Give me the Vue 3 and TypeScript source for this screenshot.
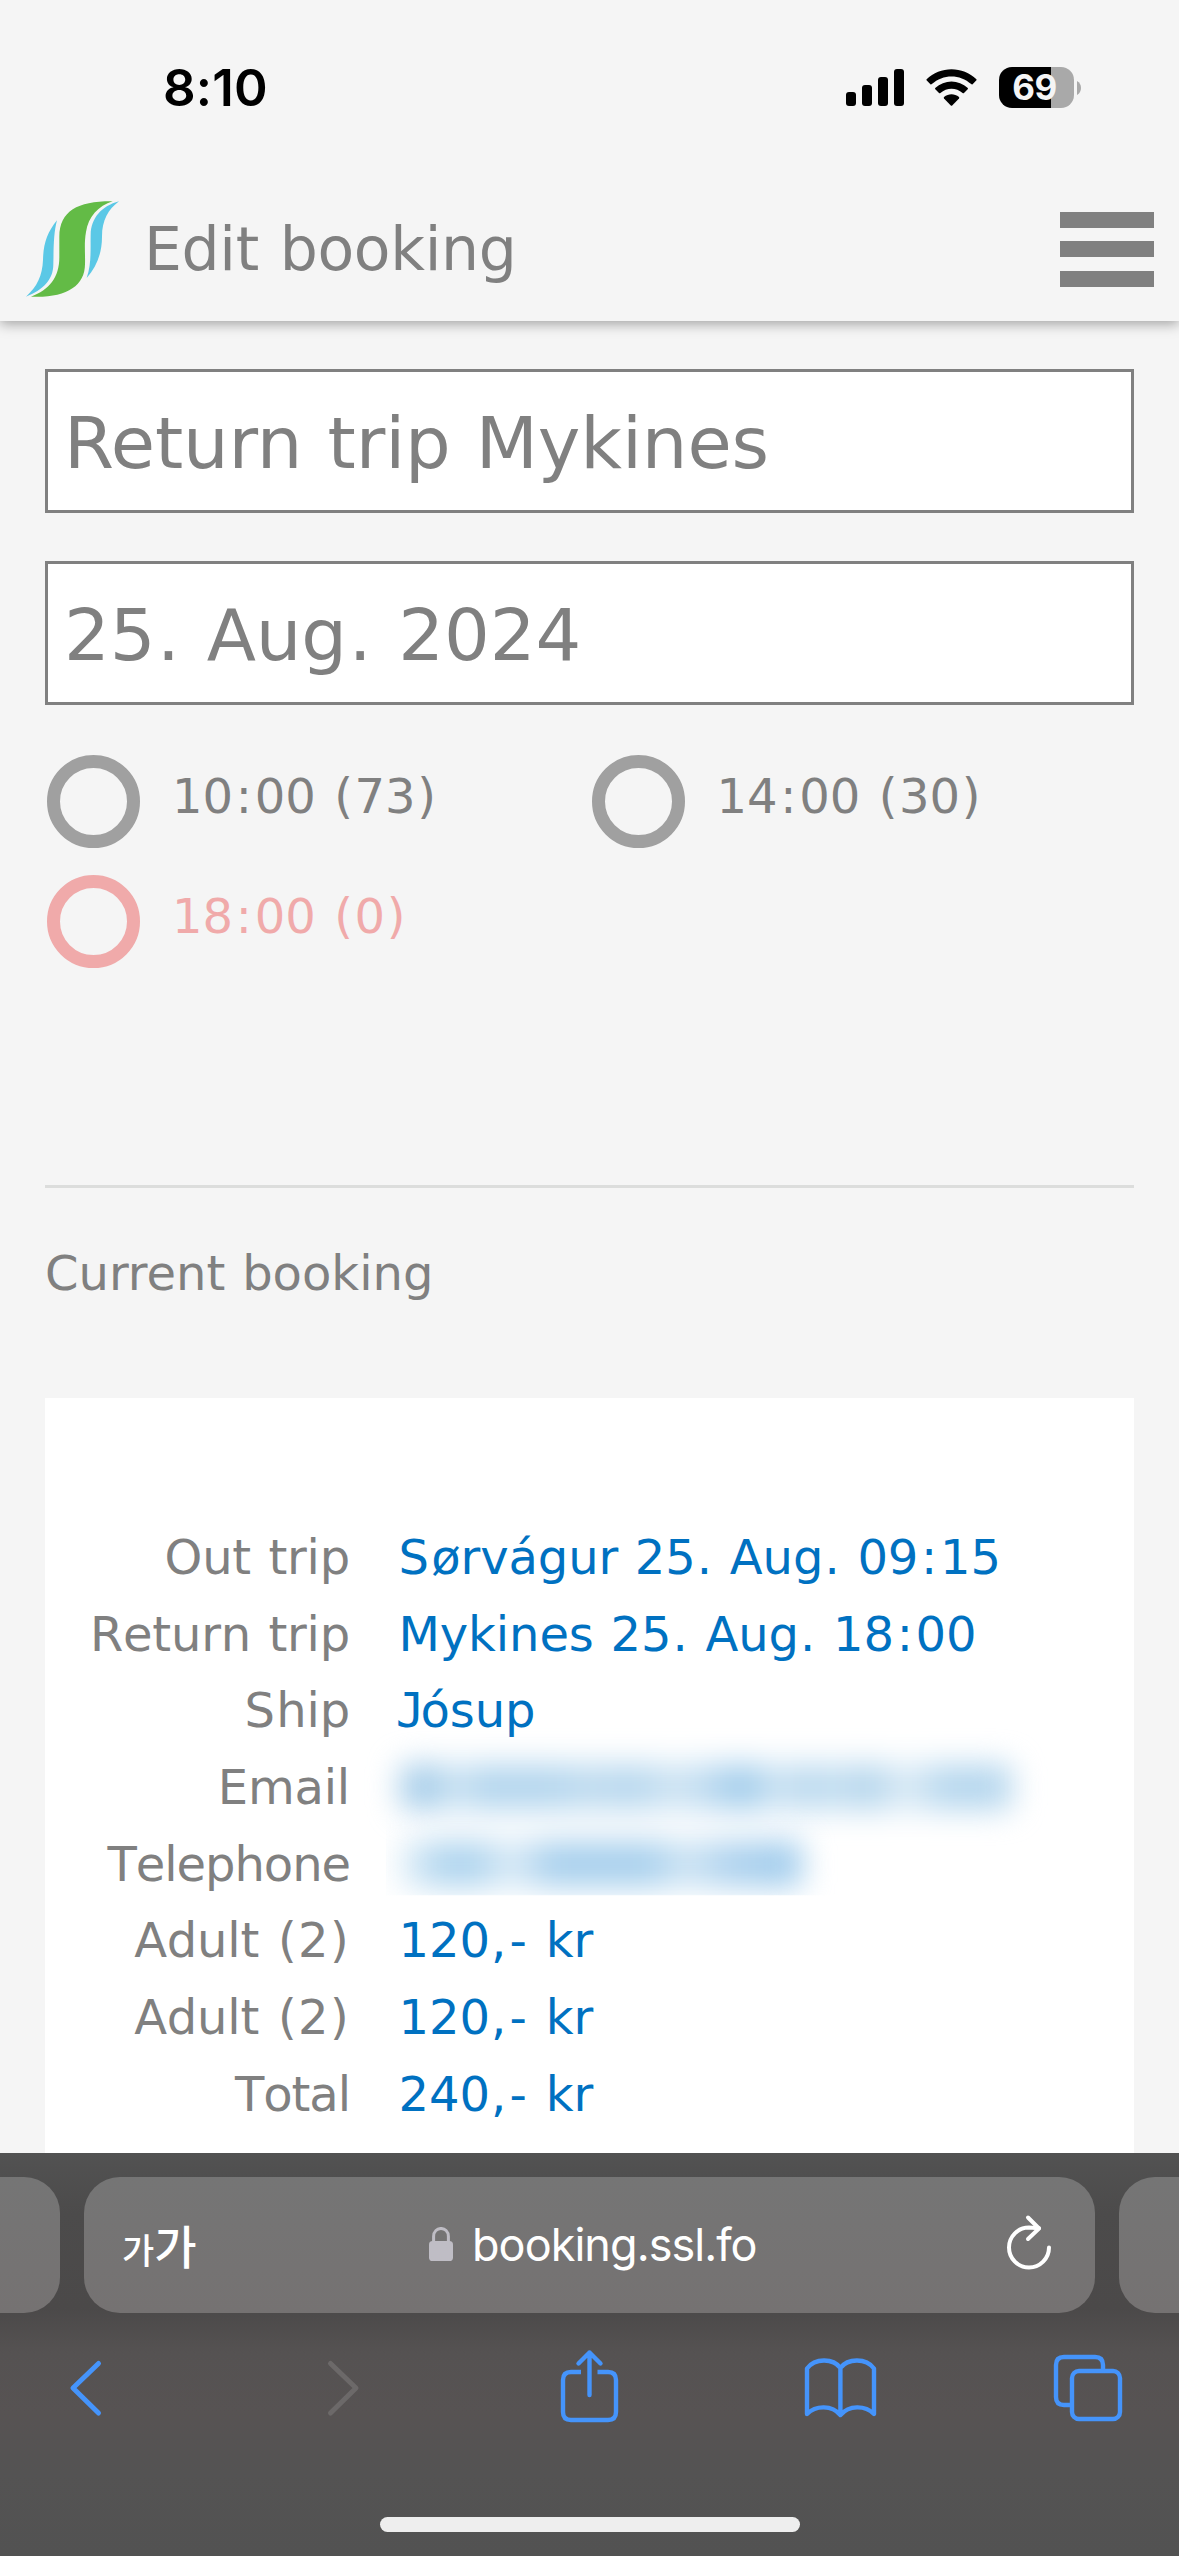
<script setup lang="ts">
interface Departure { label: string; soldOut: boolean }
interface Detail { label: string; value: string; hidden?: 'email' | 'phone' }
interface Piece { text: string; kind: string }

const departures: Departure[] = [
  { label: '10:00 (73)', soldOut: false },
  { label: '14:00 (30)', soldOut: false },
  { label: '18:00 (0)', soldOut: true },
]

const details: Detail[] = [
  { label: 'Out trip', value: 'Sørvágur 25. Aug. 09:15' },
  { label: 'Return trip', value: 'Mykines 25. Aug. 18:00' },
  { label: 'Ship', value: 'Jósup' },
  { label: 'Email', value: '', hidden: 'email' },
  { label: 'Telephone', value: '', hidden: 'phone' },
  { label: 'Adult (2)', value: '120,- kr' },
  { label: 'Adult (2)', value: '120,- kr' },
  { label: 'Total', value: '240,- kr' },
]

// Punctuation gets wider side bearings than the font gives it.
const kinds: Record<string, string> = {
  '.': 'dot', ',': 'dot', ':': 'colon', '(': 'paren', ')': 'paren', '-': 'dash', J: 'jay', S: 'ess',
}
function pieces(text: string): Piece[] {
  return text
    .split(/([.,:()\-JS])/)
    .filter((t) => t.length > 0)
    .map((t) => ({ text: t, kind: kinds[t] ?? 'run' }))
}
</script>

<template>
  <div class="screen">
    <div class="status">
      <span class="time">8:10</span>
      <div class="indicators">
        <svg class="signal" width="58" height="37" viewBox="0 0 58 37">
          <rect x="0" y="23" width="10" height="14" rx="3" />
          <rect x="16" y="16" width="10" height="21" rx="3" />
          <rect x="32" y="8" width="10" height="29" rx="3" />
          <rect x="48" y="0" width="10" height="37" rx="3" />
        </svg>
        <svg class="wifi" width="51" height="38" viewBox="0 0 51 38">
          <path d="M0.6 10.2 C14 -3.2 37 -3.2 50.4 10.2 Q50.8 11 50.2 11.6 L46.6 15.2 Q45.9 15.7 45.2 15.1 C34 4.8 17 4.8 5.8 15.1 Q5.1 15.7 4.4 15.2 L0.8 11.6 Q0.2 11 0.6 10.2Z" />
          <path d="M9.2 19 C18.5 10.2 32.5 10.2 41.8 19 Q42.2 19.7 41.7 20.3 L38 24 Q37.3 24.5 36.6 24 C30.2 18.2 20.8 18.2 14.4 24 Q13.7 24.5 13 24 L9.3 20.3 Q8.8 19.7 9.2 19Z" />
          <path d="M18 28 C22.5 24.4 28.5 24.4 33 28 Q33.5 28.8 33 29.4 L26.2 36.4 Q25.5 37 24.8 36.4 L18 29.4 Q17.5 28.8 18 28Z" />
        </svg>
        <div class="battery"><span>69</span></div>
        <svg class="nub" width="4" height="14" viewBox="0 0 4 14"><path d="M0 0 Q4 2.4 4 7 Q4 11.6 0 14Z" fill="#a9a9a9" /></svg>
      </div>
    </div>

    <header class="header">
      <svg class="logo" width="120" height="120" viewBox="0 0 360 360">
        <path fill="#5bc8e6" d="M126 91 C97 127 85 160 84 210 C82 258 66 290 33 320 C84 300 115 270 115 222 C116 170 116 128 126 91Z" />
        <path fill="#63bb46" d="M293 34 C190 33 134 62 133 140 L133 202 C133 262 103 300 48 320 C150 325 210 290 210 222 C211 190 207 160 213 126 C220 80 250 48 293 34Z" />
        <path fill="#5bc8e6" d="M312 34 C260 48 228 84 227 134 C226 180 230 220 215 264 C245 230 261 190 261 140 C261 90 280 58 312 34Z" />
      </svg>
      <h1>Edit booking</h1>
      <div class="menu"><i></i><i></i><i></i></div>
    </header>

    <main class="main">
      <div class="field">Return trip Mykines</div>
      <div class="field"><span v-for="(p, i) in pieces('25. Aug. 2024')" :key="i" :class="p.kind">{{ p.text }}</span></div>

      <div class="departures">
        <div v-for="d in departures" :key="d.label" class="departure" :class="{ sold: d.soldOut }">
          <i class="ring"></i>
          <span class="dlabel"><span v-for="(p, i) in pieces(d.label)" :key="i" :class="p.kind">{{ p.text }}</span></span>
        </div>
      </div>

      <h2>Current booking</h2>

      <section class="card">
        <div v-for="(r, n) in details" :key="n" class="row">
          <span class="label" :class="{ tight: r.label.startsWith('T') }"><span v-for="(p, i) in pieces(r.label)" :key="i" :class="p.kind">{{ p.text }}</span></span>
          <span v-if="r.hidden" class="secret" :class="{ cut: r.hidden === 'phone' }"><i :class="r.hidden"></i></span>
          <span v-else class="value"><span v-for="(p, i) in pieces(r.value)" :key="i" :class="p.kind">{{ p.text }}</span></span>
        </div>
      </section>
    </main>

    <footer class="browser">
      <div class="tabs">
        <div class="tab side left"></div>
        <div class="tab address">
          <span class="reader"><small>가</small>가</span>
          <svg class="lock" width="24" height="34" viewBox="0 0 24 34">
            <path d="M4.6 16 V9.5 C4.6 -1.2 19.4 -1.2 19.4 9.5 V16" fill="none" stroke="#bfbdc5" stroke-width="3" />
            <rect x="0" y="14" width="24" height="20" rx="3.6" fill="#bfbdc5" />
          </svg>
          <span class="host">booking.ssl.fo</span>
          <svg class="reload" width="48" height="58" viewBox="0 0 48 58" fill="none" stroke="#fff" stroke-width="4" stroke-linecap="round" stroke-linejoin="round">
            <path d="M44 34.5 A20 20 0 1 1 24 14.5 L34 15.2" />
            <path d="M23 4.5 L34 15.5 L23 26" />
          </svg>
        </div>
        <div class="tab side right"></div>
      </div>
      <nav class="tools">
        <svg class="back" width="41" height="90" viewBox="0 0 41 90"><path d="M33.5 23.5 L8 48 L33.5 73" /></svg>
        <svg class="forward" width="41" height="90" viewBox="0 0 41 90"><path d="M7.5 23.5 L33 48 L7.5 73" /></svg>
        <svg class="share" width="71" height="90" viewBox="0 0 71 90">
          <path stroke-linecap="butt" d="M27 32 H17 Q9 32 9 40 V72 Q9 80 17 80 H54 Q62 80 62 72 V40 Q62 32 54 32 H43.500" />
          <path d="M35.500 55 V12.500 M24.500 23.500 L35.500 12.500 L46.500 23.500" />
        </svg>
        <svg class="book" width="85" height="90" viewBox="0 0 85 90">
          <path d="M42.400 28 C35 18 17 18 9 28.500 V74 C18 65 34 65 42.400 75 C51 65 67 65 76 74 V28.500 C68 18 50 18 42.400 28 V74" />
        </svg>
        <svg class="pages" width="82" height="90" viewBox="0 0 82 90">
          <path stroke-linecap="butt" d="M24 65 H17 Q9 65 9 57 V25 Q9 17 17 17 H48 Q56 17 56 25 V30" />
          <rect x="25" y="31" width="48" height="48" rx="7" />
        </svg>
      </nav>
      <div class="home"></div>
    </footer>
  </div>
</template>

<style>
body { margin: 0; background: #f5f5f5; }
</style>

<style scoped>
* { box-sizing: border-box; }
svg { display: block; flex: none; }
.screen {
  width: 1179px; height: 2556px; overflow: hidden;
  display: flex; flex-direction: column;
  background: #f5f5f5; color: #808080;
  font-family: "DejaVu Sans", Verdana, sans-serif;
}
.status { height: 185px; flex: none; display: flex; justify-content: space-between; padding: 0 98px 0 163px; color: #000; }
.time { font: 600 51px/60px Inter, sans-serif; margin-top: 58px; letter-spacing: 0.2px; }
.indicators { display: flex; align-items: flex-start; padding-top: 67px; }
.signal { margin-top: 2px; }
.wifi { margin: 2px 22px 0; }
.battery {
  width: 75px; height: 41px; border-radius: 13px;
  background: linear-gradient(90deg, #000 52px, #a9a9a9 52px);
  color: #f5f5f5; font: 700 35px/41px Inter, sans-serif; text-align: center; letter-spacing: -0.5px;
  padding-right: 4px;
}
.nub { margin: 14px 0 0 3px; }

.header {
  height: 136px; flex: none; display: flex; position: relative;
  padding: 5px 25px 0 15px;
  box-shadow: 0 3px 12px rgba(0, 0, 0, 0.34);
  clip-path: inset(0 0 -30px 0);
}
h1 { font-size: 60px; line-height: 72px; font-weight: 400; margin: 23px 0 0 9px; word-spacing: 2px; letter-spacing: -0.32px; }
.menu { margin: 21.500px 0 0 auto; display: flex; flex-direction: column; gap: 13.500px; }
.menu i { width: 94px; height: 16px; background: #808080; }

.main { flex: 1; min-height: 0; overflow: hidden; padding: 48px 45px 0; }
.field {
  width: 1089px; height: 144px; margin-bottom: 48px; padding: 4px 0 0 16px;
  border: 3px solid #808080; background: #fff;
  font-size: 72px; line-height: 134px; word-spacing: 2.400px; letter-spacing: -0.1px; white-space: nowrap;
}
.departures {
  display: flex; flex-wrap: wrap; align-content: flex-start; width: 1089px;
  height: 435px; border-bottom: 3px solid #dcdddc;
}
.departure { width: 544.500px; height: 120px; display: flex; padding: 2px 0 0 2px; }
.ring { width: 93px; height: 93px; border: 13px solid #a0a0a0; border-radius: 50%; flex: none; }
.dlabel { margin: 6px 0 0 32px; font-size: 48px; line-height: 70px; word-spacing: 1.600px; white-space: nowrap; }
.sold { color: #f0aaaa; }
.sold .ring { border-color: #f0aaaa; }
h2 { margin: 55px 0 0; font-size: 48px; line-height: 60px; font-weight: 400; word-spacing: 1.600px; }
.card { width: 1089px; height: 900px; margin-top: 95px; padding-top: 121px; background: #fff; }
.row { display: flex; height: 76.670px; line-height: 76.670px; font-size: 48px; word-spacing: 1.600px; white-space: nowrap; }
.label { width: 305px; text-align: right; font-kerning: none; word-spacing: 2.400px; letter-spacing: -0.2px; }
.tight { letter-spacing: -1.05px; }
.value { margin-left: 48.500px; color: #0071c1; letter-spacing: -0.1px; }

.dot { margin: 0 0.023em; }
.colon { margin: 0 0.058em; }
.paren { margin: 0 0.032em; }
.dash { margin: 0 0.047em; }
.ess { margin: 0 0.05em 0 0; }
.label .ess { margin-right: 0.032em; }
.jay { font-family: "DejaVu Sans Mono", monospace; margin: 0 0 0 -0.06em; letter-spacing: -0.085em; }

.secret { margin-left: 36px; width: 660px; height: 76.670px; display: flex; align-items: center; }
.cut { clip-path: inset(-40px 0 7px 0); }
.secret i { height: 46px; margin-left: 14px; filter: blur(15px); border-radius: 8px; }
.email {
  width: 612px;
  background: linear-gradient(90deg, #a9cfea 0 38px, #d4e8f5 52px, #b4d6ee 80px 150px, #c0dcf0 190px, #b6d7ee 235px, #d0e5f4 275px, #bcdaf0 310px, #9ccaea 345px, #d0e5f4 376px, #b8d8ee 405px, #c6e0f1 435px, #b2d4ec 470px, #deedf7 505px, #b6d7ee 545px 612px);
}
.phone {
  width: 402px;
  background: linear-gradient(90deg, #e4f1f9 0, #aed4ee 45px 75px, #dcecf7 112px, #a8d0ed 150px 250px, #cfe5f4 285px, #aed2ee 330px, #9ecbec 402px);
}

.browser {
  height: 403px; flex: none; padding-top: 24px;
  background: linear-gradient(#525252 0, #4c4b4b 60px, #4b4949 155px, #555252 200px, #575353 260px, #545353 320px, #525252 403px);
}
.tabs { display: flex; justify-content: space-between; }
.tab { height: 136px; background: linear-gradient(#757575, #757272); }
.side { width: 60px; }
.left { border-radius: 0 36px 36px 0; }
.right { border-radius: 36px 0 0 36px; }
.address { width: 1011px; border-radius: 36px; display: flex; color: #fff; }
.reader { width: 345px; padding-left: 38px; font: 500 46px/60px "Noto Sans CJK KR", sans-serif; margin-top: 37px; white-space: nowrap; }
.reader small { font-size: 35px; }
.lock { margin-top: 50px; }
.host { font: 400 45px/60px Inter, sans-serif; margin: 38px 0 0 19px; letter-spacing: -0.95px; width: 300px; white-space: nowrap; }
.reload { margin: 36px 0 0 233px; }
.tools { display: flex; padding: 27px 0 0 64.500px; }
.tools svg { fill: none; stroke: #4594fb; stroke-width: 4.400; stroke-linecap: round; stroke-linejoin: round; }
.tools .back, .tools .forward { stroke-width: 5; }
.tools .forward { margin-left: 217px; stroke: #6c6969; }
.tools .share { margin-left: 190px; }
.tools .book { margin-left: 173px; }
.tools .pages { margin-left: 164.500px; }
.home { width: 420px; height: 15px; margin: 87px auto 0; border-radius: 8px; background: #eee; }
</style>
